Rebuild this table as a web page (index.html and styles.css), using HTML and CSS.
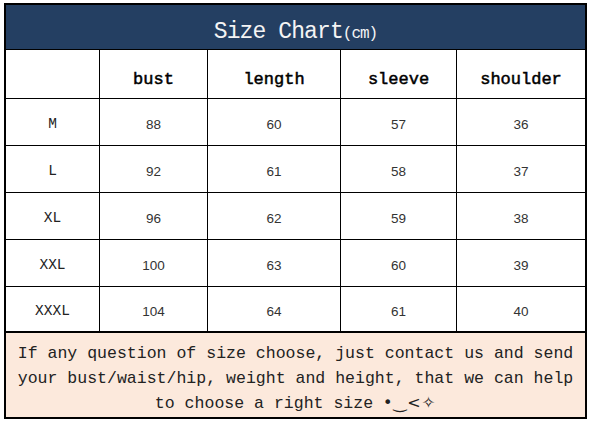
FILE: index.html
```html
<!DOCTYPE html>
<html>
<head>
<meta charset="utf-8">
<link rel="stylesheet" href="styles.css">
</head>
<body>
<div class="chart">
  <div class="title">Size Chart<span class="unit">(cm)</span></div>
  <div class="grid">
    <div class="cell head"></div>
    <div class="cell head">bust</div>
    <div class="cell head">length</div>
    <div class="cell head">sleeve</div>
    <div class="cell head">shoulder</div>

    <div class="cell size">M</div>
    <div class="cell num">88</div>
    <div class="cell num">60</div>
    <div class="cell num">57</div>
    <div class="cell num">36</div>

    <div class="cell size">L</div>
    <div class="cell num">92</div>
    <div class="cell num">61</div>
    <div class="cell num">58</div>
    <div class="cell num">37</div>

    <div class="cell size">XL</div>
    <div class="cell num">96</div>
    <div class="cell num">62</div>
    <div class="cell num">59</div>
    <div class="cell num">38</div>

    <div class="cell size">XXL</div>
    <div class="cell num">100</div>
    <div class="cell num">63</div>
    <div class="cell num">60</div>
    <div class="cell num">39</div>

    <div class="cell size">XXXL</div>
    <div class="cell num">104</div>
    <div class="cell num">64</div>
    <div class="cell num">61</div>
    <div class="cell num">40</div>
  </div>
  <div class="note">If any question of size choose, just contact us and send<br>your bust/waist/hip, weight and height, that we can help<br>to choose a right size <span class="emo">•‿&lt;✧</span></div>
</div>
</body>
</html>
```

FILE: styles.css
```css
html, body {
  margin: 0;
  padding: 0;
  background: #ffffff;
}

.chart {
  margin: 3px 0 0 4px;
  width: 579px;
  border: 2px solid #000;
  background: #000;
  display: flex;
  flex-direction: column;
}

.title {
  height: 44px;
  box-sizing: border-box;
  padding-top: 10px;
  line-height: 34px;
  background: #243f62;
  color: #f4f4f4;
  text-align: center;
  font-family: "Liberation Mono", monospace;
  font-size: 23px;
  letter-spacing: -0.9px;
  margin-bottom: 1px;
}

.unit {
  font-size: 16px;
  letter-spacing: -1px;
}

.grid {
  display: grid;
  grid-template-columns: 93px 107px 132px 115px 128px;
  grid-template-rows: 48px 46px 46px 46px 46px 44px;
  gap: 1px;
  background: #000;
}

.cell {
  background: #fff;
  display: flex;
  align-items: center;
  justify-content: center;
  color: #111;
  box-sizing: border-box;
}

.head {
  font-family: "Liberation Mono", monospace;
  font-size: 17px;
  padding-top: 10px;
  color: #000;
  -webkit-text-stroke: 0.5px #000;
}

.size {
  font-family: "Liberation Mono", monospace;
  font-size: 14.5px;
  padding-top: 4px;
  color: #222;
}

.num {
  font-family: "Liberation Sans", sans-serif;
  font-size: 13.5px;
  padding-top: 4px;
  color: #333;
}

.note {
  margin-top: 2px;
  height: 84px;
  box-sizing: border-box;
  padding-top: 8px;
  background: #fce9dc;
  text-align: center;
  font-family: "Liberation Mono", monospace;
  font-size: 16.55px;
  line-height: 25px;
  color: #222;
  white-space: nowrap;
}

.emo {
  font-family: "DejaVu Sans", sans-serif;
  font-size: 16px;
  line-height: 1;
  letter-spacing: 1px;
}
```
